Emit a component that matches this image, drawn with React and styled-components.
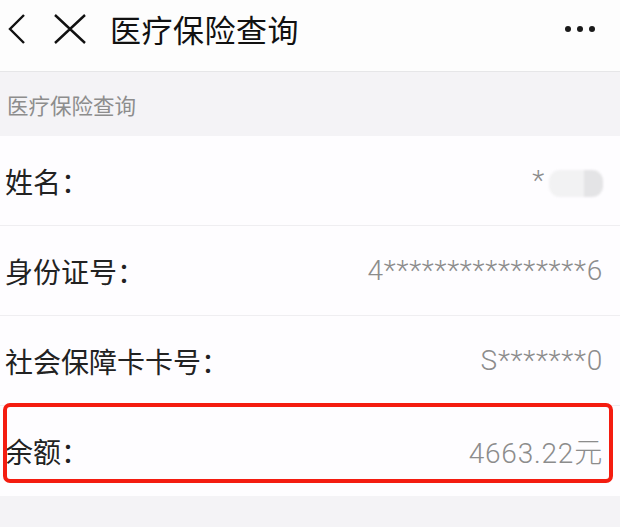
import React from 'react';
import styled, { createGlobalStyle } from 'styled-components';

const GlobalStyle = createGlobalStyle`
  html, body {
    margin: 0;
    padding: 0;
    background: #f4f3f6;
  }
  body {
    font-family: Roboto, "Noto Sans CJK SC", sans-serif;
  }
`;

const Page = styled.div`
  width: 620px;
  height: 527px;
  overflow: hidden;
  background: #f4f3f6;
`;

const Header = styled.div`
  height: 72px;
  box-sizing: border-box;
  display: flex;
  align-items: center;
  padding: 0 25px 14px 7px;
  background: #fdfdfd;
  border-bottom: 1px solid #e6e6e8;
`;

const IconButton = styled.span`
  display: flex;
  align-items: center;
  justify-content: center;
  width: ${(p) => p.width}px;
  margin-right: ${(p) => p.gap}px;
`;

const Title = styled.h1`
  flex: 1;
  margin: 0;
  font-family: "Noto Sans CJK SC", sans-serif;
  font-size: 31px;
  font-weight: 400;
  color: #111;
  letter-spacing: 0.5px;
`;

const Dots = styled.span`
  display: flex;
  gap: 6px;
`;

const Dot = styled.i`
  width: 6px;
  height: 6px;
  border-radius: 50%;
  background: #1a1a1a;
`;

const SectionTitle = styled.div`
  height: 64px;
  display: flex;
  align-items: center;
  padding-left: 7px;
  font-family: "Noto Sans CJK SC", sans-serif;
  font-size: 21.5px;
  color: #8d8d8d;
`;

const List = styled.div`
  background: #fefdff;
`;

const Row = styled.div`
  position: relative;
  height: 89px;
  display: flex;
  align-items: center;
  justify-content: space-between;
  padding: 0 17px 0 5px;
  border-bottom: 1px solid ${(p) => (p.last ? '#fefdff' : '#efeef1')};

  ${(p) =>
    p.marked &&
    `
    &::after {
      content: '';
      position: absolute;
      left: 3px;
      right: 7px;
      top: -3px;
      bottom: 12px;
      border: 4px solid #f41c10;
      border-radius: 7px;
    }
  `}
`;

const Label = styled.span`
  font-family: "Noto Sans CJK SC", sans-serif;
  font-size: 28px;
  color: #222;
`;

const Value = styled.span`
  display: flex;
  align-items: center;
  font-family: Roboto, "Noto Sans CJK SC", sans-serif;
  font-weight: 300;
  font-size: 28px;
  letter-spacing: 0.8px;
  color: #8c8c8c;
`;

const Blurred = styled.span`
  display: inline-block;
  width: 54px;
  height: 27px;
  margin: 6px 0 0 4px;
  border-radius: 11px;
  background: linear-gradient(90deg, #f2f2f3 0 64%, #e4e4e6 64% 100%);
  filter: blur(1px);
`;

const rows = [
  { label: '姓名：', value: <>*<Blurred /></> },
  { label: '身份证号：', value: '4****************6' },
  { label: '社会保障卡卡号：', value: 'S*******0' },
  { label: '余额：', value: '4663.22元', marked: true },
];

const App = () => (
  <Page>
    <GlobalStyle />
    <Header>
      <IconButton width={20} gap={25}>
        <svg width="20" height="30" viewBox="0 0 20 30">
          <path d="M17 1 L3 15 L17 29" fill="none" stroke="#111" strokeWidth="2.4" />
        </svg>
      </IconButton>
      <IconButton width={36} gap={22}>
        <svg width="36" height="30" viewBox="0 0 36 30">
          <path d="M3 1 L33 29 M33 1 L3 29" fill="none" stroke="#111" strokeWidth="2.4" />
        </svg>
      </IconButton>
      <Title>医疗保险查询</Title>
      <Dots>
        <Dot />
        <Dot />
        <Dot />
      </Dots>
    </Header>
    <SectionTitle>医疗保险查询</SectionTitle>
    <List>
      {rows.map((r, i) => (
        <Row key={r.label} marked={r.marked} last={i === rows.length - 1}>
          <Label>{r.label}</Label>
          <Value>{r.value}</Value>
        </Row>
      ))}
    </List>
  </Page>
);

export default App;
